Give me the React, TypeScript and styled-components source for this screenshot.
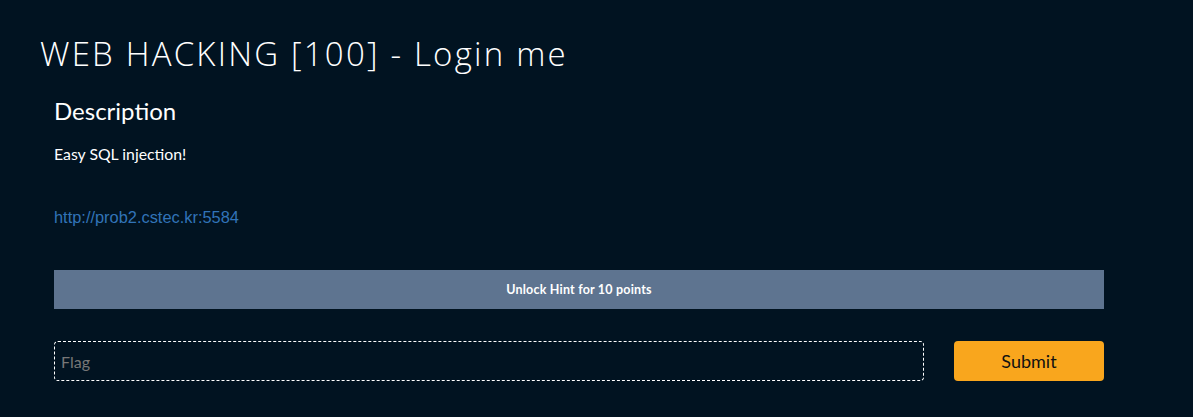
import React from "react";
import styled, { createGlobalStyle } from "styled-components";

const Global = createGlobalStyle`
  html, body { margin: 0; padding: 0; background: #011321; }
  body { font-family: Lato, "Noto Sans", sans-serif; color: #fff; }
`;

const Page = styled.div`
  min-height: 417px;
  background: #011321;
  padding: 34px 0 0 40px;
  box-sizing: border-box;
`;

const Title = styled.h1`
  margin: 0;
  font-family: "Open Sans", Lato, sans-serif;
  font-weight: 300;
  font-size: 33px;
  line-height: 40px;
  letter-spacing: 2.2px;
  color: #fff;
`;

const Body = styled.div`
  width: 1050px;
  margin-left: 14px;
  padding-top: 22px;
`;

const Heading = styled.h2`
  margin: 0;
  font-family: Lato, sans-serif;
  font-weight: 400;
  font-size: 24px;
  line-height: 30px;
`;

const Text = styled.p`
  margin: 18px 0 0;
  font-size: 15.8px;
  line-height: 20px;
`;

const Link = styled.a`
  display: block;
  margin-top: 43px;
  font-family: "Liberation Sans", Arial, sans-serif;
  font-size: 16.4px;
  line-height: 20px;
  color: #3173b8;
  text-decoration: none;
`;

const HintBar = styled.div`
  margin-top: 43px;
  height: 39px;
  background: #5e7490;
  display: flex;
  align-items: center;
  justify-content: center;
  font-size: 12.5px;
  font-weight: 700;
  color: #fff;
  letter-spacing: 0.2px;
`;

const Row = styled.form`
  margin-top: 32px;
  display: flex;
  gap: 30px;
`;

const FlagInput = styled.input`
  flex: 1;
  height: 40px;
  box-sizing: border-box;
  background: transparent;
  border: 1px dashed #fff;
  border-radius: 4px;
  padding: 0 6px;
  font-family: Lato, sans-serif;
  font-size: 16px;
  color: #fff;
  outline: none;
  &::placeholder { color: #777; }
`;

const Submit = styled.button`
  width: 150px;
  height: 40px;
  border: none;
  border-radius: 4px;
  background: #f9a61d;
  color: #111;
  font-family: Lato, sans-serif;
  font-size: 18px;
  cursor: pointer;
`;

export default function App() {
  return (
    <>
      <Global />
      <Page>
        <Title>WEB HACKING [100] - Login me</Title>
        <Body>
          <Heading>Description</Heading>
          <Text>Easy SQL injection!</Text>
          <Link href="#">http://prob2.cstec.kr:5584</Link>
          <HintBar>Unlock Hint for 10 points</HintBar>
          <Row onSubmit={(e) => e.preventDefault()}>
            <FlagInput placeholder="Flag" />
            <Submit type="submit">Submit</Submit>
          </Row>
        </Body>
      </Page>
    </>
  );
}
